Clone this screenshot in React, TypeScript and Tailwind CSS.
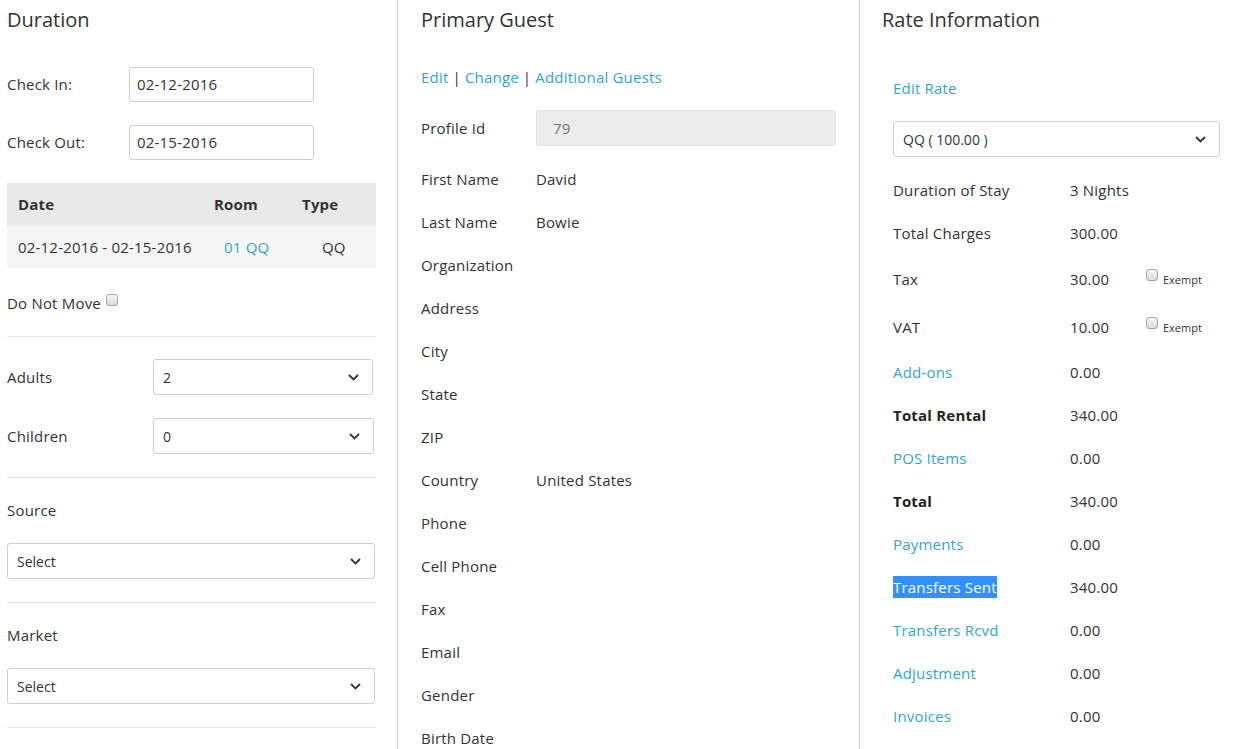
import React from 'react';

const LINK = 'text-[#31a5d0]';

function Chevron() {
  return (
    <svg width="11" height="7" viewBox="0 0 11 7" className="shrink-0">
      <polyline points="1,1 5.5,5.5 10,1" fill="none" stroke="#333" strokeWidth="1.8" />
    </svg>
  );
}

function SelectBox({ value, className = '' }: { value: string; className?: string }) {
  return (
    <div
      className={`h-[36px] flex items-center justify-between pl-[9px] pr-[13px] border border-[#cfcfcf] rounded-[3px] bg-white text-[14px] tracking-normal text-[#333] ${className}`}
    >
      <span>{value}</span>
      <Chevron />
    </div>
  );
}

function Box() {
  return (
    <span className="inline-block w-[12px] h-[12px] rounded-[3px] border border-[#a5a5a5] bg-gradient-to-b from-[#f4f4f4] to-[#dcdcdc]" />
  );
}

function Divider({ className = '' }: { className?: string }) {
  return <div className={`h-px bg-[#e6e6e6] ${className}`} />;
}

function Duration() {
  return (
    <div className="w-[398px] shrink-0 border-r border-[#cccccc] pl-[7px] pr-[21px] min-h-[749px]">
      <h2 className="h-10 flex items-center text-[20px] tracking-normal text-[#333]">Duration</h2>

      <div className="mt-[27px] h-[35px] flex items-center">
        <span className="w-[122px]">Check In:</span>
        <div className="w-[185px] h-[35px] flex items-center pl-[7px] border border-[#cfcfcf] rounded-[3px]">02-12-2016</div>
      </div>
      <div className="mt-[23px] h-[35px] flex items-center">
        <span className="w-[122px]">Check Out:</span>
        <div className="w-[185px] h-[35px] flex items-center pl-[7px] border border-[#cfcfcf] rounded-[3px]">02-15-2016</div>
      </div>

      {/* room table */}
      <div className="mt-[23px]">
        <div className="grid grid-cols-[207px_88px_74px] h-[43px] items-center bg-[#e9e9e9] font-bold">
          <span className="pl-[11px]">Date</span>
          <span>Room</span>
          <span>Type</span>
        </div>
        <div className="grid grid-cols-[207px_88px_74px] h-[42px] items-center bg-[#f5f5f5]">
          <span className="pl-[11px]">02-12-2016 - 02-15-2016</span>
          <span className={`pl-[10px] ${LINK}`}>01 QQ</span>
          <span className="pl-[20px]">QQ</span>
        </div>
      </div>

      <div className="mt-[25px] h-[20px] flex items-center">
        <span>Do Not Move</span>
        <span className="ml-[5px] -mt-[6px] flex"><Box /></span>
      </div>

      <Divider className="mt-[23px]" />

      <div className="mt-[22px] flex items-center">
        <span className="w-[146px]">Adults</span>
        <SelectBox value="2" className="w-[220px]" />
      </div>
      <div className="mt-[23px] flex items-center">
        <span className="w-[146px]">Children</span>
        <SelectBox value="0" className="w-[221px]" />
      </div>

      <Divider className="mt-[23px]" />
      <div className="mt-[22px] h-[20px] flex items-center">Source</div>
      <SelectBox value="Select" className="mt-[23px] w-[368px]" />

      <Divider className="mt-[23px]" />
      <div className="mt-[22px] h-[20px] flex items-center">Market</div>
      <SelectBox value="Select" className="mt-[23px] w-[368px]" />
      <Divider className="mt-[23px]" />
    </div>
  );
}

const guestRows: [string, string][] = [
  ['First Name', 'David'],
  ['Last Name', 'Bowie'],
  ['Organization', ''],
  ['Address', ''],
  ['City', ''],
  ['State', ''],
  ['ZIP', ''],
  ['Country', 'United States'],
  ['Phone', ''],
  ['Cell Phone', ''],
  ['Fax', ''],
  ['Email', ''],
  ['Gender', ''],
  ['Birth Date', ''],
];

function PrimaryGuest() {
  return (
    <div className="w-[462px] shrink-0 border-r border-[#cccccc] pl-[23px] pr-[23px] min-h-[749px]">
      <h2 className="h-10 flex items-center text-[20px] tracking-normal text-[#333]">Primary Guest</h2>

      <div className="mt-[27px] h-[20px] flex items-center gap-[4px]">
        <span className={LINK}>Edit</span>
        <span>|</span>
        <span className={LINK}>Change</span>
        <span>|</span>
        <span className={LINK}>Additional Guests</span>
      </div>

      <div className="mt-[23px] flex items-center">
        <span className="w-[115px]">Profile Id</span>
        <div className="w-[300px] h-[36px] flex items-center pl-[16px] bg-[#ebebeb] border border-[#e2e2e2] rounded-[3px] text-[#777]">79</div>
      </div>

      <div className="mt-[12px]">
        {guestRows.map(([label, value]) => (
          <div key={label} className="h-[43px] flex items-center">
            <span className="w-[115px]">{label}</span>
            <span>{value}</span>
          </div>
        ))}
      </div>
    </div>
  );
}

type RateRow = { label: string; value: string; link?: boolean; bold?: boolean; exempt?: boolean; selected?: boolean; h?: string };

const rateRows: RateRow[] = [
  { label: 'Duration of Stay', value: '3 Nights' },
  { label: 'Total Charges', value: '300.00' },
  { label: 'Tax', value: '30.00', exempt: true, h: 'h-[48px]' },
  { label: 'VAT', value: '10.00', exempt: true, h: 'h-[48px]' },
  { label: 'Add-ons', value: '0.00', link: true },
  { label: 'Total Rental', value: '340.00', bold: true },
  { label: 'POS Items', value: '0.00', link: true },
  { label: 'Total', value: '340.00', bold: true },
  { label: 'Payments', value: '0.00', link: true },
  { label: 'Transfers Sent', value: '340.00', selected: true },
  { label: 'Transfers Rcvd', value: '0.00', link: true },
  { label: 'Adjustment', value: '0.00', link: true },
  { label: 'Invoices', value: '0.00', link: true },
];

function RateInformation() {
  return (
    <div className="flex-1 pl-[22px] pr-[24px] min-h-[749px]">
      <h2 className="h-10 flex items-center text-[20px] tracking-normal text-[#333]">Rate Information</h2>
      <div className="pl-[11px]">
        <div className={`mt-[38px] h-[20px] flex items-center ${LINK}`}>Edit Rate</div>
        <SelectBox value="QQ ( 100.00 )" className="mt-[23px] w-[327px]" />

        <div className="mt-[12px]">
          {rateRows.map((r) => (
            <div key={r.label} className={`${r.h ?? 'h-[43px]'} flex items-center`}>
              <span className="w-[177px] shrink-0">
                <span
                  className={
                    r.selected
                      ? 'bg-[#3390ff] text-white py-[1px]'
                      : r.link
                      ? LINK
                      : r.bold
                      ? 'font-bold text-[#222]'
                      : ''
                  }
                >
                  {r.label}
                </span>
              </span>
              <span className="w-[76px] shrink-0">{r.value}</span>
              {r.exempt && (
                <span className="flex items-start gap-[5px]">
                  <span className="-mt-[2px] flex"><Box /></span>
                  <span className="text-[11px] leading-[14px] tracking-normal mt-[2px]">Exempt</span>
                </span>
              )}
            </div>
          ))}
        </div>
      </div>
    </div>
  );
}

export default function App() {
  return (
    <div className="w-[1244px] h-[749px] overflow-hidden bg-white flex text-[15px] tracking-[0.2px] text-[#333] font-['Open_Sans',sans-serif]">
      <Duration />
      <PrimaryGuest />
      <RateInformation />
    </div>
  );
}
